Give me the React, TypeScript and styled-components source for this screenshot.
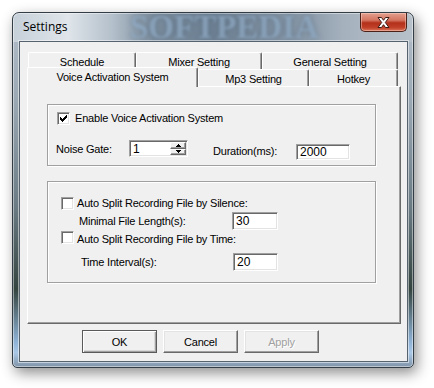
import React from "react";
import styled, {createGlobalStyle, css} from "styled-components";

const GlobalStyle = createGlobalStyle`
	html, body {
		margin: 0;
		padding: 0;
		background: #fff;
	}
	body {
		font-family: "Liberation Sans", Arial, sans-serif;
		font-size: 11px;
		letter-spacing: -0.2px;
		color: #000;
	}
`;

const Page = styled.div`
	box-sizing: border-box;
	width: 434px;
	height: 388px;
	padding: 12px 0 0 12px;
	overflow: hidden;
`;

const Window = styled.div`
	box-sizing: border-box;
	width: 402px;
	height: 356px;
	display: flex;
	flex-direction: column;
	padding: 0 5px 5px 6px;
	border: 1px solid #333d45;
	border-radius: 7px 7px 5px 5px;
	background:
		linear-gradient(to right, #c6d0d9 0, #dfe5ea 55px, #b3bfca 100px, #7a8c9d 140px, #6d8093 200px, #8797a7 290px, #a5b1bd 330px, #b7c1ca 100%) top / 100% 29px no-repeat,
		linear-gradient(to bottom, #b4c0cb 0%, #9aa8b4 25%, #6a7b84 55%, #34443f 78%, #8fb3d6 93%, #a9c7e6 96%, #8094a8 100%);
	box-shadow: inset 0 0 0 1px rgba(255, 255, 255, 0.45), 3px 5px 14px rgba(0, 0, 0, 0.45);
`;

const TitleBar = styled.div`
	position: relative;
	height: 28px;
	display: flex;
	align-items: flex-start;
`;

const Title = styled.div`
	flex: 1;
	padding-left: 4px;
	line-height: 28px;
	font-family: "Open Sans", "Noto Sans", sans-serif;
	font-size: 12px;
	letter-spacing: 0;
	color: #000;
	position: relative;
	z-index: 1;
`;

const Watermark = styled.div`
	position: absolute;
	left: 111px;
	top: 0;
	font-family: "Liberation Serif", serif;
	font-weight: bold;
	font-size: 33px;
	letter-spacing: 0;
	line-height: 28px;
	color: rgba(150, 176, 202, 0.75);
	text-shadow: 0 0 4px rgba(60, 80, 100, 0.5);
	filter: blur(1.4px);
	pointer-events: none;
`;

const CloseButton = styled.div`
	box-sizing: border-box;
	width: 47px;
	height: 19px;
	margin-right: 1px;
	display: flex;
	align-items: center;
	justify-content: center;
	border: 1px solid #4b2118;
	border-top: none;
	border-radius: 0 0 5px 5px;
	background: linear-gradient(to bottom, #e3a08f 0%, #d47560 40%, #b3301b 55%, #c03f27 80%, #d9755a 100%);
	box-shadow: inset 0 0 0 1px rgba(255, 220, 210, 0.45);
	position: relative;
	z-index: 1;
`;

const Client = styled.div`
	flex: 1;
	display: flex;
	flex-direction: column;
	padding: 10px 6px 0 7px;
	border: 1px solid #56626e;
	background: #f0f0f0;
	box-shadow: 0 0 0 1px rgba(255, 255, 255, 0.5);
	position: relative;
	z-index: 1;
`;

const TabRow = styled.div<{$indent?: number}>`
	display: flex;
	align-items: flex-end;
	height: 17px;
	margin-left: ${({$indent = 0}) => $indent}px;
`;

const Tab = styled.div<{$w: number; $active?: boolean}>`
	box-sizing: border-box;
	flex: none;
	width: ${({$w}) => $w}px;
	height: 17px;
	display: flex;
	align-items: center;
	justify-content: center;
	padding-top: 1px;
	border-top: 1px solid #fff;
	border-left: 1px solid #fff;
	border-right: 1px solid #696969;
	border-radius: 2px 2px 0 0;
	box-shadow: inset -1px 0 0 #a0a0a0;
	background: #f0f0f0;
	white-space: nowrap;
	${({$active}) =>
		$active &&
		css`
			position: relative;
			z-index: 1;
			height: 20px;
			margin-bottom: -1px;
			padding: 0 0 2px;
		`}
`;

const Panel = styled.div`
	box-sizing: border-box;
	height: 238px;
	display: flex;
	flex-direction: column;
	gap: 15px;
	padding: 17px 0 0 19px;
	border-top: 1px solid #fff;
	border-left: 1px solid #fff;
	border-right: 1px solid #696969;
	border-bottom: 1px solid #696969;
	box-shadow: inset -1px -1px 0 #a0a0a0;
`;

const Group = styled.div<{$h: number; $top: number; $left: number}>`
	box-sizing: border-box;
	width: 329px;
	height: ${({$h}) => $h}px;
	display: flex;
	flex-direction: column;
	padding: ${({$top, $left}) => `${$top}px 0 0 ${$left}px`};
	border: 1px solid #a0a0a0;
	box-shadow: inset 1px 1px 0 #fff, 1px 1px 0 #fff;
`;

const CheckRow = styled.div<{$mt?: number}>`
	display: flex;
	align-items: flex-start;
	height: 13px;
	margin-top: ${({$mt = 0}) => $mt}px;
`;

const Box = styled.span`
	box-sizing: border-box;
	flex: none;
	width: 13px;
	height: 13px;
	display: flex;
	align-items: flex-start;
	justify-content: flex-start;
	background: #fff;
	border-top: 1px solid #a0a0a0;
	border-left: 1px solid #a0a0a0;
	border-right: 1px solid #fff;
	border-bottom: 1px solid #fff;
	box-shadow: inset 1px 1px 0 #696969, inset -1px -1px 0 #e3e3e3;
`;

const Text = styled.span<{$ml?: number; $mt?: number; $w?: number}>`
	flex: none;
	line-height: 13px;
	white-space: nowrap;
	margin-left: ${({$ml = 0}) => $ml}px;
	margin-top: ${({$mt = 0}) => $mt}px;
	${({$w}) => $w !== undefined && css`width: ${$w}px;`}
`;

const FieldRow = styled.div<{$mt: number; $h: number; $ml?: number}>`
	display: flex;
	align-items: flex-start;
	height: ${({$h}) => $h}px;
	margin-top: ${({$mt}) => $mt}px;
	margin-left: ${({$ml = 0}) => $ml}px;
`;

const Input = styled.div<{$w: number; $h: number; $mt?: number}>`
	box-sizing: border-box;
	flex: none;
	width: ${({$w}) => $w}px;
	height: ${({$h}) => $h}px;
	margin-top: ${({$mt = 0}) => $mt}px;
	display: flex;
	align-items: center;
	padding-left: 3px;
	background: #fff;
	border-top: 1px solid #a0a0a0;
	border-left: 1px solid #a0a0a0;
	border-right: 1px solid #fff;
	border-bottom: 1px solid #fff;
	box-shadow: inset 1px 1px 0 #696969, inset -1px -1px 0 #e3e3e3;
	font-size: 12px;
	letter-spacing: 0;
`;

const SpinValue = styled.span`
	flex: 1;
`;

const SpinButtons = styled.div`
	align-self: stretch;
	display: flex;
	flex-direction: column;
	width: 16px;
	margin: 1px 1px 1px 0;
`;

const SpinButton = styled.div`
	box-sizing: border-box;
	flex: 1;
	display: flex;
	align-items: center;
	justify-content: center;
	background: #f0f0f0;
	border-top: 1px solid #fff;
	border-left: 1px solid #fff;
	border-right: 1px solid #696969;
	border-bottom: 1px solid #696969;
	box-shadow: inset -1px -1px 0 #a0a0a0;
`;

const ButtonRow = styled.div`
	display: flex;
	gap: 6px;
	margin-top: 6px;
	padding-left: 55px;
`;

const Button = styled.div<{$default?: boolean; $disabled?: boolean}>`
	box-sizing: border-box;
	width: 75px;
	height: 23px;
	display: flex;
	align-items: center;
	justify-content: center;
	background: #f0f0f0;
	border-top: 1px solid #fff;
	border-left: 1px solid #fff;
	border-right: 1px solid #696969;
	border-bottom: 1px solid #696969;
	box-shadow: inset -1px -1px 0 #a0a0a0, inset 1px 1px 0 #e3e3e3;
	color: ${({$disabled}) => ($disabled ? "#a0a0a0" : "#000")};
	text-shadow: ${({$disabled}) => ($disabled ? "1px 1px 0 #fff" : "none")};
	${({$default}) =>
		$default &&
		css`
			border: 1px solid #5a5a5a;
			box-shadow: inset 1px 1px 0 #fff, inset -1px -1px 0 #a0a0a0, inset -2px -2px 0 #d8d8d8;
		`}
`;

const CHECK = [
	[0, 2],
	[1, 3],
	[2, 4],
	[3, 3],
	[4, 2],
	[5, 1],
	[6, 0]
];

const Checkbox: React.FC<{checked?: boolean}> = ({checked}) => (
	<Box>
		{checked && (
			<svg width="11" height="11" viewBox="0 0 11 11" shapeRendering="crispEdges">
				{CHECK.map(([x, y]) => (
					<rect key={x} x={x + 2} y={y + 2} width="1" height="3" fill="#000" />
				))}
			</svg>
		)}
	</Box>
);

const Arrow: React.FC<{up?: boolean}> = ({up}) => (
	<svg width="5" height="3" viewBox="0 0 5 3" shapeRendering="crispEdges">
		<polygon points={up ? "2.5,0 5,3 0,3" : "0,0 5,0 2.5,3"} fill="#000" />
	</svg>
);

const CloseGlyph = () => (
	<svg width="13" height="11" viewBox="0 0 13 11">
		<path
			d="M1 0.5 L4.5 0.5 L6.5 3.3 L8.5 0.5 L12 0.5 L8.3 5.5 L12 10.5 L8.5 10.5 L6.5 7.7 L4.5 10.5 L1 10.5 L4.7 5.5 Z"
			fill="#fff"
			stroke="#3d1a12"
			strokeWidth="1"
			strokeLinejoin="round"
		/>
	</svg>
);

export default function App() {
	return (
		<Page>
			<GlobalStyle />
			<Window>
				<TitleBar>
					<Watermark>SOFTPEDIA</Watermark>
					<Title>Settings</Title>
					<CloseButton>
						<CloseGlyph />
					</CloseButton>
				</TitleBar>
				<Client>
					<TabRow $indent={1}>
						<Tab $w={108}>Schedule</Tab>
						<Tab $w={126}>Mixer Setting</Tab>
						<Tab $w={136}>General Setting</Tab>
					</TabRow>
					<TabRow>
						<Tab $w={171} $active>
							Voice Activation System
						</Tab>
						<Tab $w={111}>Mp3 Setting</Tab>
						<Tab $w={89}>Hotkey</Tab>
					</TabRow>
					<Panel>
						<Group $h={62} $top={7} $left={9}>
							<CheckRow>
								<Checkbox checked />
								<Text $ml={5}>Enable Voice Activation System</Text>
							</CheckRow>
							<FieldRow $mt={15} $h={19} $ml={-1}>
								<Text $w={73} $mt={3}>
									Noise Gate:
								</Text>
								<Input $w={59} $h={17}>
									<SpinValue>1</SpinValue>
									<SpinButtons>
										<SpinButton>
											<Arrow up />
										</SpinButton>
										<SpinButton>
											<Arrow />
										</SpinButton>
									</SpinButtons>
								</Input>
								<Text $ml={25} $w={83} $mt={5}>
									Duration(ms):
								</Text>
								<Input $w={54} $h={16} $mt={4}>
									2000
								</Input>
							</FieldRow>
						</Group>
						<Group $h={102} $top={15} $left={13}>
							<CheckRow>
								<Checkbox />
								<Text $ml={3}>Auto Split Recording File by Silence:</Text>
							</CheckRow>
							<FieldRow $mt={2} $h={18} $ml={18}>
								<Text $w={153} $mt={3}>
									Minimal File Length(s):
								</Text>
								<Input $w={46} $h={18}>
									30
								</Input>
							</FieldRow>
							<CheckRow $mt={1}>
								<Checkbox />
								<Text $ml={3} $mt={2}>
									Auto Split Recording File by Time:
								</Text>
							</CheckRow>
							<FieldRow $mt={9} $h={18} $ml={20}>
								<Text $w={152} $mt={3}>
									Time Interval(s):
								</Text>
								<Input $w={45} $h={18}>
									20
								</Input>
							</FieldRow>
						</Group>
					</Panel>
					<ButtonRow>
						<Button $default>OK</Button>
						<Button>Cancel</Button>
						<Button $disabled>Apply</Button>
					</ButtonRow>
				</Client>
			</Window>
		</Page>
	);
}
